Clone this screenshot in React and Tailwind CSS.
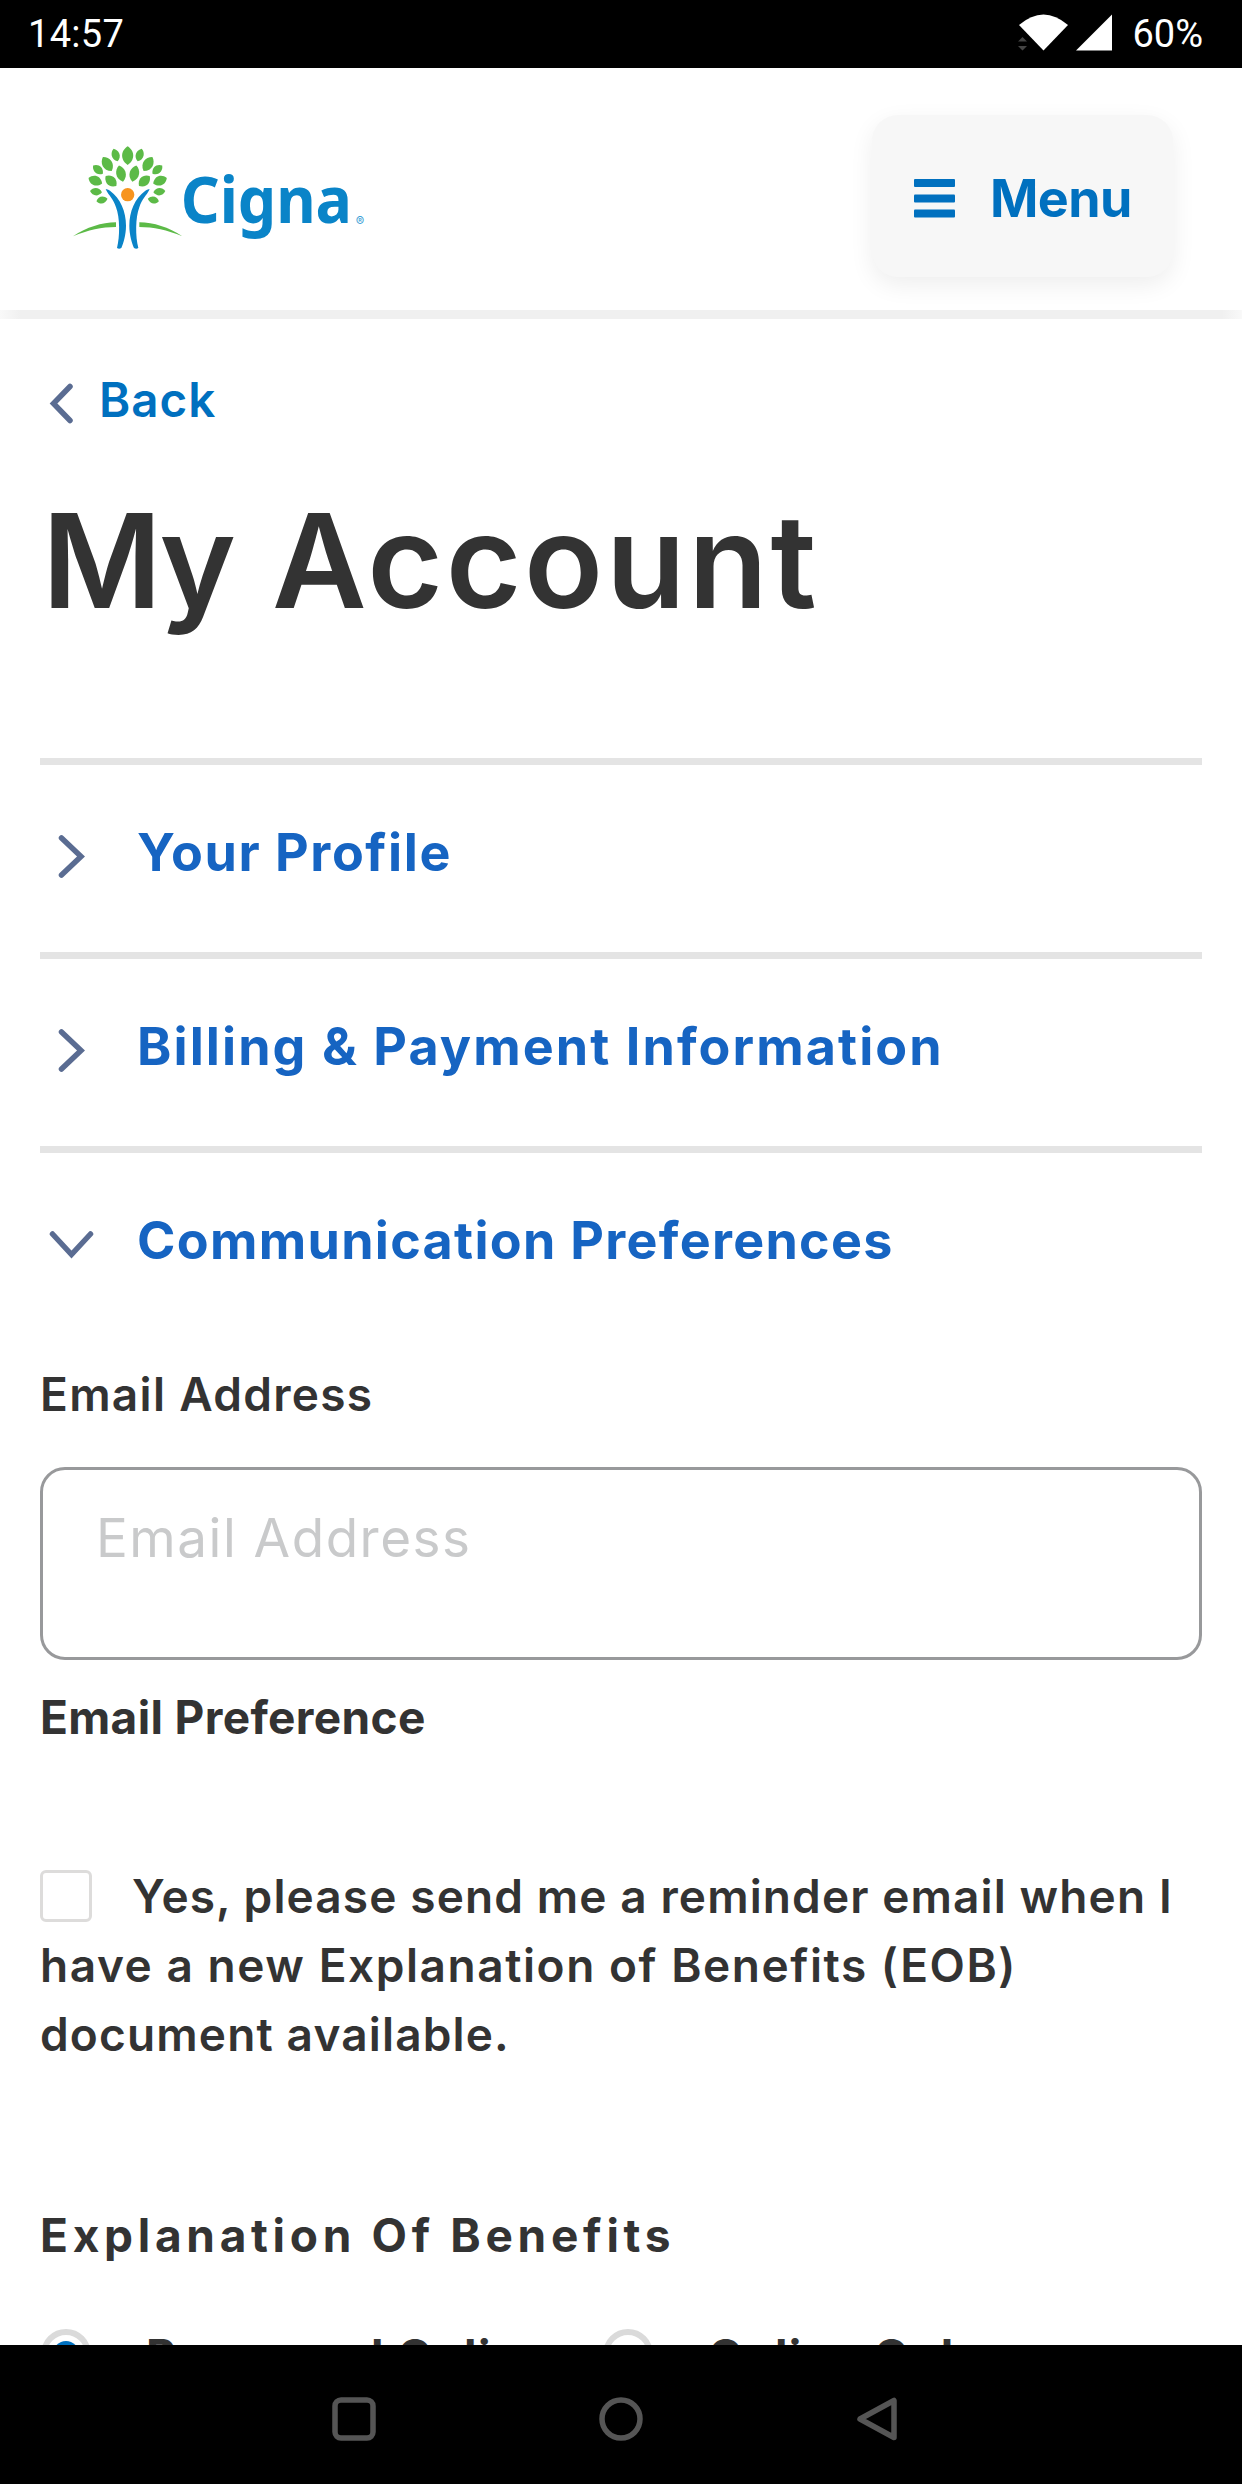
import clsx from "clsx";

const sections = [
    { label: "Your Profile", open: false, tracking: "tracking-[1.6px]" },
    { label: "Billing & Payment Information", open: false, tracking: "tracking-[2.080px]" },
    { label: "Communication Preferences", open: true, tracking: "tracking-[1.3px]" },
];

// one half of the crown, mirrored for the other side
const leaves = [
    { x: 167, y: 75, w: 15, h: 20, r: -18 },
    { x: 142, y: 102, w: 19, h: 25, r: -32 },
    { x: 114, y: 119, w: 15, h: 19, r: -50 },
    { x: 106, y: 152, w: 18, h: 22, r: -68 },
    { x: 108, y: 185, w: 14, h: 18, r: -84 },
    { x: 126, y: 210, w: 13, h: 17, r: -102 },
    { x: 183, y: 131, w: 18, h: 25, r: -14 },
    { x: 153, y: 153, w: 18, h: 22, r: -47 },
];

function Leaf({ x, y, w, h, r }) {
    return (
        <path
            d={`M0 ${-h} C${w * 0.9} ${-h * 0.6} ${w * 1.2} ${h * 0.4} 0 ${h} C${-w * 1.2} ${h * 0.4} ${-w * 0.9} ${-h * 0.6} 0 ${-h}Z`}
            transform={`translate(${x} ${y}) rotate(${r})`}
        />
    );
}

function TreeHalf() {
    return (
        <>
            <g fill="#5cba47">
                {leaves.map((leaf) => (
                    <Leaf key={`${leaf.x}-${leaf.y}`} {...leaf} />
                ))}
                <path d="M39 319 C80 291 125 278 168 277 L168 291 C125 291 85 300 39 319Z" />
            </g>
            <path
                fill="#0a84c8"
                d="M137 178 Q143 176 150 182 C182 205 198 245 198 287 C198 315 190 340 184 354 Q177 359 171 354 C180 320 180 262 168 232 C160 206 147 198 137 178Z"
            />
        </>
    );
}

function Logo() {
    return (
        <svg viewBox="0 0 960 390" className="mt-[62px] ml-[60px] h-[130px] w-[320px]">
            <g fill="#5cba47">
                <Leaf x={203} y={77} w={21} h={28} r={0} />
            </g>
            <TreeHalf />
            <g transform="translate(406 0) scale(-1 1)">
                <TreeHalf />
            </g>
            <circle cx="203" cy="194" r="20" fill="#f7941e" />
            <text
                x="362"
                y="280"
                textLength="514"
                lengthAdjust="spacingAndGlyphs"
                fill="#0a84c8"
                className="font-['Noto_Sans',sans-serif] text-[194px] font-bold"
            >
                Cigna
            </text>
            <text x="887" y="288" fill="#3d9fd6" className="font-['Inter',sans-serif] text-[38px]">
                ®
            </text>
        </svg>
    );
}

function StatusBar() {
    return (
        <div className="flex h-[68px] items-center justify-between bg-black pr-[39px] pl-7 font-['Roboto',sans-serif] text-[38px] text-white">
            <span className="tracking-[0.3px]">14:57</span>
            <div className="flex items-center">
                <svg viewBox="0 0 98 68" className="mr-[18px] h-[68px] w-[98px]">
                    <path d="M3 25 Q27.500 4 52 25 L27.500 50.500Z" fill="#fff" />
                    <path d="M60 50.500 L96 14.500 V50.500Z" fill="#fff" />
                    <path d="M2 41.500 L6.500 37 L11 41.500Z M2 46 H11 L6.500 50.500Z" fill="#444" />
                </svg>
                <span>60%</span>
            </div>
        </div>
    );
}

function Header() {
    return (
        <header>
            <div className="flex h-[242px] items-start justify-between">
                <Logo />
                <button className="mt-[47px] mr-[69px] flex h-[162px] w-[301px] items-center rounded-[26px] bg-[#f7f7f7] pt-1.5 pl-[42px] text-[52px] font-bold tracking-[-0.6px] text-[#0070bf] shadow-[0_8px_24px_rgba(0,0,0,0.07)]">
                    <svg viewBox="0 0 41 39" fill="currentColor" className="mr-[35px] -mt-0.5 h-[39px] w-[41px]">
                        <rect width="41" height="8" rx="1" />
                        <rect y="15.500" width="41" height="8" rx="1" />
                        <rect y="30.500" width="41" height="8" rx="1" />
                    </svg>
                    Menu
                </button>
            </div>
            <div className="h-[9px] bg-[linear-gradient(to_right,#f9f9f9,#f0f0f0_20px,#f0f0f0_1222px,#f9f9f9)]" />
        </header>
    );
}

function SectionRow({ label, open, tracking }) {
    return (
        <div className="flex h-[194px] border-t-[7px] border-[#e4e4e4] pt-[52px]">
            <svg
                viewBox="0 0 60 70"
                fill="none"
                stroke="#5a6c92"
                strokeWidth="5.500"
                strokeLinecap="round"
                strokeLinejoin="miter"
                className="mr-[37px] h-[70px] w-[60px] shrink-0"
            >
                {open ? <path d="M12.500 29 L31.500 49.500 L50.500 29" /> : <path d="M21.500 21 L41 39.500 L21.500 58" />}
            </svg>
            <h2 className={clsx("pt-px text-[52px] leading-[70px] font-bold text-[#1664c2]", tracking)}>{label}</h2>
        </div>
    );
}

function Radio({ label, checked }) {
    return (
        <label className="flex items-start">
            <span className="ml-px flex size-[50px] items-center justify-center rounded-full border-[6px] border-[#dadada]">
                {checked && <span className="size-[26px] rounded-full bg-[#0070bf]" />}
            </span>
            <span className="ml-[55px] text-[46px] leading-[54px] font-bold tracking-[1.4px] whitespace-nowrap">{label}</span>
        </label>
    );
}

function Preferences() {
    return (
        <div>
            <label className="mt-[27px] block text-[46px] leading-[55px] font-semibold tracking-[1.3px]">Email Address</label>
            <input
                placeholder="Email Address"
                className="mt-[45px] block h-[193px] w-full rounded-[25px] border-[3px] border-[#98999b] pt-[33px] pb-[84px] pl-[53px] text-[53px] leading-[70px] tracking-[1.5px] placeholder:text-[#c9cacb]"
            />
            <h3 className="mt-[30px] text-[46px] leading-[55px] font-bold tracking-[0.35px]">Email Preference</h3>

            <div className="mt-[117px] text-[46px] leading-[69px] font-semibold whitespace-nowrap">
                <span className="float-left mt-2 mr-10 size-[52px] rounded-md border-[3px] border-[#dddcdb]" />
                <span className="tracking-[1.11px]">Yes, please send me a reminder email when I</span>
                <br />
                <span className="tracking-[1.55px]">have a new Explanation of Benefits (EOB)</span>
                <br />
                <span className="tracking-[1.15px]">document available.</span>
            </div>

            <h3 className="mt-[139px] text-[46px] leading-[55px] font-bold tracking-[4.7px]">Explanation Of Benefits</h3>
            <div className="mt-[66px] grid grid-cols-[562px_1fr]">
                <Radio label="Paper and Online" checked />
                <Radio label="Online Only" />
            </div>
        </div>
    );
}

function NavBar() {
    return (
        <nav className="flex h-[139px] items-start bg-black pt-[51px] pl-[331px]">
            <svg viewBox="0 0 46 46" fill="none" stroke="#555" strokeWidth="5.500" className="size-[46px]">
                <rect x="4" y="4" width="38" height="38" rx="6" />
            </svg>
            <svg viewBox="0 0 46 46" fill="none" stroke="#555" strokeWidth="5.500" className="ml-[221px] size-[46px]">
                <circle cx="23" cy="23" r="19" />
            </svg>
            <svg viewBox="0 0 46 46" fill="none" stroke="#555" strokeWidth="5.500" strokeLinejoin="round" className="ml-[211px] size-[46px]">
                <path d="M39 4.500 V41.500 L5 23Z" />
            </svg>
        </nav>
    );
}

export default function App() {
    return (
        <div className="h-[2484px] w-[1242px] overflow-hidden bg-white font-['Inter',sans-serif] text-[#333]">
            <StatusBar />
            <Header />

            <main className="h-[2026px] overflow-hidden px-10">
                {/* Back link */}
                <a href="#" className="mt-[51px] flex h-[60px] items-center text-[47.5px] font-semibold tracking-[1px] text-[#0070bf]">
                    <svg viewBox="0 0 59 60" fill="none" stroke="#5a6c92" strokeWidth="5.500" strokeLinecap="round" className="h-[60px] w-[59px]">
                        <path d="M30 16.500 L13.500 33.500 L30 50.500" />
                    </svg>
                    Back
                </a>
                <h1 className="mt-[53px] mb-[119px] ml-0.5 text-[130px] leading-[156px] font-semibold tracking-[2.7px]">
                    <span className="mr-1 tracking-[-3.5px]">My</span> Account
                </h1>

                {sections.map((section) => (
                    <SectionRow key={section.label} {...section} />
                ))}
                <Preferences />
            </main>

            <NavBar />
        </div>
    );
}
